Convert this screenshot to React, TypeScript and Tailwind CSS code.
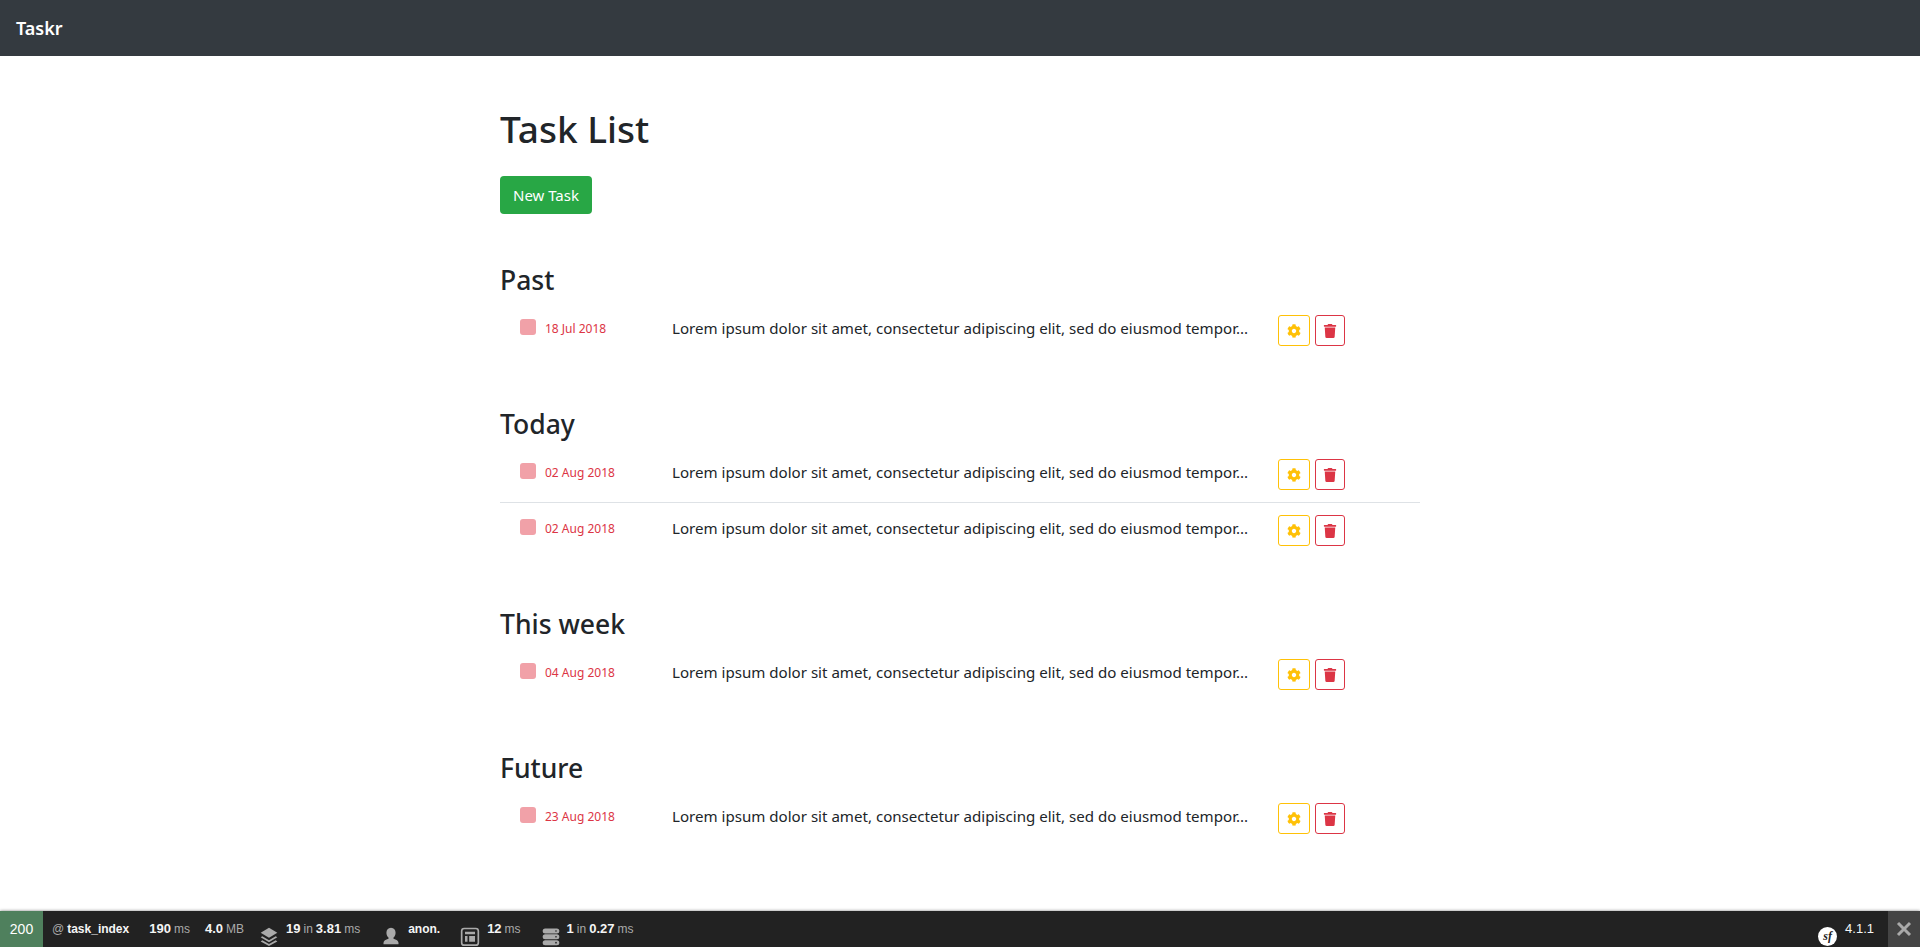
import { FaCog, FaTrash } from "react-icons/fa";

interface Task {
  date: string;
}

const sections: { title: string; tasks: Task[] }[] = [
  { title: "Past", tasks: [{ date: "18 Jul 2018" }] },
  { title: "Today", tasks: [{ date: "02 Aug 2018" }, { date: "02 Aug 2018" }] },
  { title: "This week", tasks: [{ date: "04 Aug 2018" }] },
  { title: "Future", tasks: [{ date: "23 Aug 2018" }] },
];

const LOREM = "Lorem ipsum dolor sit amet, consectetur adipiscing elit, sed do eiusmod tempor...";

function TaskRow({ task, divider }: { task: Task; divider: boolean }) {
  return (
    <div className={`flex h-[56px] items-start pt-[12px] ${divider ? "-mt-px mb-px border-t border-[#dee2e6]" : ""}`}>
      <div className="ml-[20px] mt-[4px] h-[16px] w-[16px] rounded-[3px] bg-[#f1a1a8]"></div>
      <div className="ml-[9px] mt-[5px] w-[127px] text-[12px] leading-[18px] text-[#dc3545]">{task.date}</div>
      <div className="mt-[2px] w-[606px] whitespace-nowrap text-[15.1px] leading-[22px] text-[#212529]">{LOREM}</div>
      <button className="flex h-[31px] w-[32px] items-center justify-center rounded-[3px] border border-[#ffc107] text-[14px] text-[#ffc107]">
        <FaCog />
      </button>
      <button className="ml-[5px] flex h-[31px] w-[30px] items-center justify-center rounded-[3px] border border-[#dc3545] text-[14px] text-[#dc3545]">
        <FaTrash />
      </button>
    </div>
  );
}

function Metric({ value, unit }: { value: string; unit?: string }) {
  return (
    <span className="text-[13px] font-bold text-[#f5f5f5]">
      {value}
      {unit && <span className="ml-[3px] text-[12px] font-normal text-[#aaaaaa]">{unit}</span>}
    </span>
  );
}

export default function App() {
  return (
    <div className="flex h-screen flex-col overflow-hidden bg-white font-['Noto_Sans','Open_Sans',sans-serif]">
      <nav className="flex h-[56px] shrink-0 items-center bg-[#343a40] px-[16px] pt-[1px]">
        <span className="text-[18px] font-semibold text-white">Taskr</span>
      </nav>

      <main className="mx-auto w-[920px] flex-1">
        <h1 className="mt-[49px] text-[37px] leading-[48px] font-medium text-[#212529]">Task List</h1>
        <button className="mt-[23px] h-[38px] w-[92px] rounded-[4px] bg-[#28a745] text-[15px] text-white">New Task</button>
        {sections.map((section, i) => (
          <section key={section.title} className={i === 0 ? "mt-[48px] pb-[47px]" : "pb-[47px]"}>
            <h3 className="h-[41px] text-[26.5px] leading-[36px] font-medium text-[#212529]">{section.title}</h3>
            {section.tasks.map((task, j) => (
              <TaskRow key={j} task={task} divider={j > 0} />
            ))}
          </section>
        ))}
      </main>

      <footer className="relative flex h-[36px] shrink-0 items-center bg-[#222222] font-['Liberation_Sans',sans-serif] text-[12px] text-[#f5f5f5] shadow-[0_0_3px_rgba(0,0,0,0.5)]">
        <div className="flex h-full w-[43px] items-center justify-center bg-[#4f805d] text-[14px] text-white">200</div>
        <span className="ml-[9px] text-[#aaaaaa]">@</span>
        <span className="ml-[3px] font-bold">task_index</span>
        <span className="ml-[20px]"><Metric value="190" unit="ms" /></span>
        <span className="ml-[15px]"><Metric value="4.0" unit="MB" /></span>
        <svg className="ml-[15px] mt-[14px] h-[20px] w-[20px] text-[#aaaaaa]" viewBox="0 0 24 24" fill="currentColor">
          <path d="M12 2 2 8l10 6 10-6-10-6z" />
          <path d="M4 12.2 2 13.5 12 19.5l10-6-2-1.3-8 4.8-8-4.8z" />
          <path d="M4 17.2 2 18.5 12 24l10-5.5-2-1.3-8 4.5-8-4.5z" />
        </svg>
        <span className="ml-[7px]"><Metric value="19" /></span>
        <span className="ml-[3px] text-[12px] text-[#aaaaaa]">in</span>
        <span className="ml-[3px]"><Metric value="3.81" unit="ms" /></span>
        <svg className="ml-[21px] mt-[14px] h-[20px] w-[20px] text-[#aaaaaa]" viewBox="0 0 24 24" fill="currentColor">
          <path d="M12 2c3.6 0 5.5 2.6 5.5 6 0 2.4-1 4.6-2.5 5.8v1.4c3.4.8 6 2.4 6 4.8v2H3v-2c0-2.4 2.6-4 6-4.8v-1.4C7.5 12.6 6.5 10.4 6.5 8c0-3.4 1.9-6 5.5-6z" />
        </svg>
        <span className="ml-[7px] font-bold">anon.</span>
        <svg className="ml-[20px] mt-[14px] h-[20px] w-[20px] text-[#aaaaaa]" viewBox="0 0 24 24" fill="none" stroke="currentColor">
          <rect x="2" y="3" width="20" height="20" rx="3" strokeWidth="2" />
          <path d="M6 7h12v3H6zM6 12h3v7H6zM11 12h7v7h-7z" fill="currentColor" stroke="none" />
        </svg>
        <span className="ml-[7px]"><Metric value="12" unit="ms" /></span>
        <svg className="ml-[20px] mt-[14px] h-[20px] w-[20px] text-[#aaaaaa]" viewBox="0 0 24 24" fill="currentColor">
          <path fillRule="evenodd" d="M5 3h14a3 3 0 0 1 0 6H5a3 3 0 0 1 0-6zm13 2a1 1 0 1 0 0 2 1 1 0 0 0 0-2zM5 10h14a3 3 0 0 1 0 6H5a3 3 0 0 1 0-6zm13 2a1 1 0 1 0 0 2 1 1 0 0 0 0-2zM5 17h14a3 3 0 0 1 0 6H5a3 3 0 0 1 0-6zm13 2a1 1 0 1 0 0 2 1 1 0 0 0 0-2z" />
        </svg>
        <span className="ml-[6px]"><Metric value="1" /></span>
        <span className="ml-[3px] text-[12px] text-[#aaaaaa]">in</span>
        <span className="ml-[3px]"><Metric value="0.27" unit="ms" /></span>

        <div className="ml-auto mt-[14px] flex h-[19px] w-[19px] items-center justify-center rounded-full bg-white font-['Liberation_Serif',serif] text-[12px] font-bold text-[#222222] italic">
          sf
        </div>
        <span className="ml-[8px] mr-[14px] text-[13px]">4.1.1</span>
        <div className="flex h-full w-[32px] items-center justify-center bg-[#444444]">
          <svg className="h-[16px] w-[16px] text-[#aaaaaa]" viewBox="0 0 16 16" stroke="currentColor" strokeWidth="3">
            <path d="M2 2l12 12M14 2 2 14" />
          </svg>
        </div>
      </footer>
    </div>
  );
}
